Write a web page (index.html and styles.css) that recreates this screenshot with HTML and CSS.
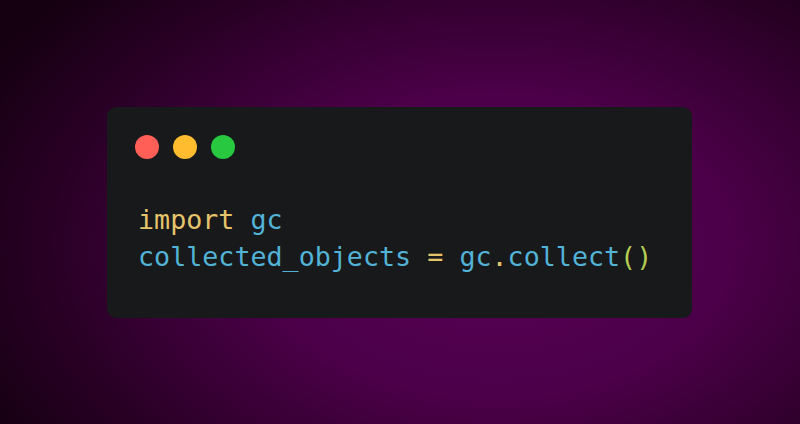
FILE: index.html
```html
<!DOCTYPE html>
<html lang="en">
<head>
<meta charset="utf-8">
<title>gc.collect</title>
<link rel="stylesheet" href="styles.css">
</head>
<body>
<main class="stage">
  <section class="window">
    <div class="controls">
      <span class="dot dot-red"></span>
      <span class="dot dot-yellow"></span>
      <span class="dot dot-green"></span>
    </div>
    <pre class="code"><code><span class="kw">import</span> <span class="id">gc</span>
<span class="id">collected_objects</span> <span class="op">=</span> <span class="id">gc</span><span class="op">.</span><span class="id">collect</span><span class="paren">(</span><span class="paren">)</span></code></pre>
  </section>
</main>
</body>
</html>
```

FILE: styles.css
```css
html, body {
  margin: 0;
  padding: 0;
  width: 800px;
  height: 424px;
  overflow: hidden;
}

body {
  background: radial-gradient(ellipse 72% 88% at 62% 58%, #570056 0%, #4c0049 40%, #2e002a 72%, #150011 100%);
}

.stage {
  width: 800px;
  height: 424px;
  box-sizing: border-box;
  padding: 107px 108px 106px 107px;
}

.window {
  width: 585px;
  height: 211px;
  box-sizing: border-box;
  background: #17191a;
  border-radius: 9px;
  padding: 28px 28px 0 28px;
}

.controls {
  display: flex;
  gap: 14px;
}

.dot {
  width: 24px;
  height: 24px;
  border-radius: 50%;
  display: block;
}

.dot-red { background: #ff5f57; }
.dot-yellow { background: #febc2e; }
.dot-green { background: #28c840; }

.code {
  margin: 42px 0 0 3px;
  font-family: "DejaVu Sans Mono", monospace;
  font-size: 26.7px;
  line-height: 37px;
  color: #52b3d6;
}

.kw { color: #e5c46c; }
.id { color: #52b3d6; }
.op { color: #e5c46c; }
.paren { color: #b3cc52; }
```
